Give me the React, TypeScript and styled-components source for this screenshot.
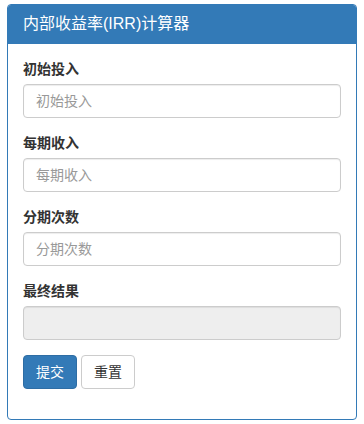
import React from "react";
import styled, { createGlobalStyle } from "styled-components";

const GlobalStyle = createGlobalStyle`
  * { box-sizing: border-box; }
  body {
    margin: 0;
    background: #fff;
    font-family: "Liberation Sans", "Noto Sans CJK SC", Arial, sans-serif;
    font-size: 14px;
    line-height: 1.42857;
    color: #333;
  }
`;

const Page = styled.div`
  padding: 4px 7px;
`;

const Panel = styled.div`
  border: 1px solid #337ab7;
  border-radius: 4px;
  background: #fff;
`;

const PanelHeading = styled.div`
  background: #337ab7;
  color: #fff;
  padding: 10px 15px;
  border-bottom: 1px solid #337ab7;
  border-top-left-radius: 3px;
  border-top-right-radius: 3px;
`;

const PanelTitle = styled.h3`
  margin: 0;
  font-size: 16px;
  font-weight: normal;
  line-height: 1.1;
`;

const PanelBody = styled.form`
  padding: 15px;
`;

const FormGroup = styled.div`
  margin-bottom: 15px;
`;

const Label = styled.label`
  display: block;
  margin-bottom: 5px;
  font-weight: bold;
  line-height: 20px;
`;

const Input = styled.input`
  display: block;
  width: 100%;
  height: 34px;
  padding: 6px 12px;
  font-family: inherit;
  font-size: 14px;
  color: #555;
  background: ${({ disabled }) => (disabled ? "#eee" : "#fff")};
  border: 1px solid #ccc;
  border-radius: 4px;
  box-shadow: inset 0 1px 1px rgba(0, 0, 0, 0.075);
  &::placeholder { color: #999; }
`;

const Button = styled.button<{ $primary?: boolean }>`
  display: inline-block;
  height: 34px;
  padding: 6px 12px;
  margin-right: 4px;
  font-family: inherit;
  font-size: 14px;
  line-height: 20px;
  border-radius: 4px;
  border: 1px solid ${({ $primary }) => ($primary ? "#2e6da4" : "#ccc")};
  background: ${({ $primary }) => ($primary ? "#337ab7" : "#fff")};
  color: ${({ $primary }) => ($primary ? "#fff" : "#333")};
`;

const fields = [
  { label: "初始投入", placeholder: "初始投入" },
  { label: "每期收入", placeholder: "每期收入" },
  { label: "分期次数", placeholder: "分期次数" },
];

export default function App() {
  return (
    <Page>
      <GlobalStyle />
      <Panel>
        <PanelHeading>
          <PanelTitle>内部收益率(IRR)计算器</PanelTitle>
        </PanelHeading>
        <PanelBody onSubmit={(e) => e.preventDefault()}>
          {fields.map((f) => (
            <FormGroup key={f.label}>
              <Label>{f.label}</Label>
              <Input type="text" placeholder={f.placeholder} />
            </FormGroup>
          ))}
          <FormGroup>
            <Label>最终结果</Label>
            <Input type="text" disabled />
          </FormGroup>
          <FormGroup>
            <Button $primary type="submit">提交</Button>
            <Button type="reset">重置</Button>
          </FormGroup>
        </PanelBody>
      </Panel>
    </Page>
  );
}
